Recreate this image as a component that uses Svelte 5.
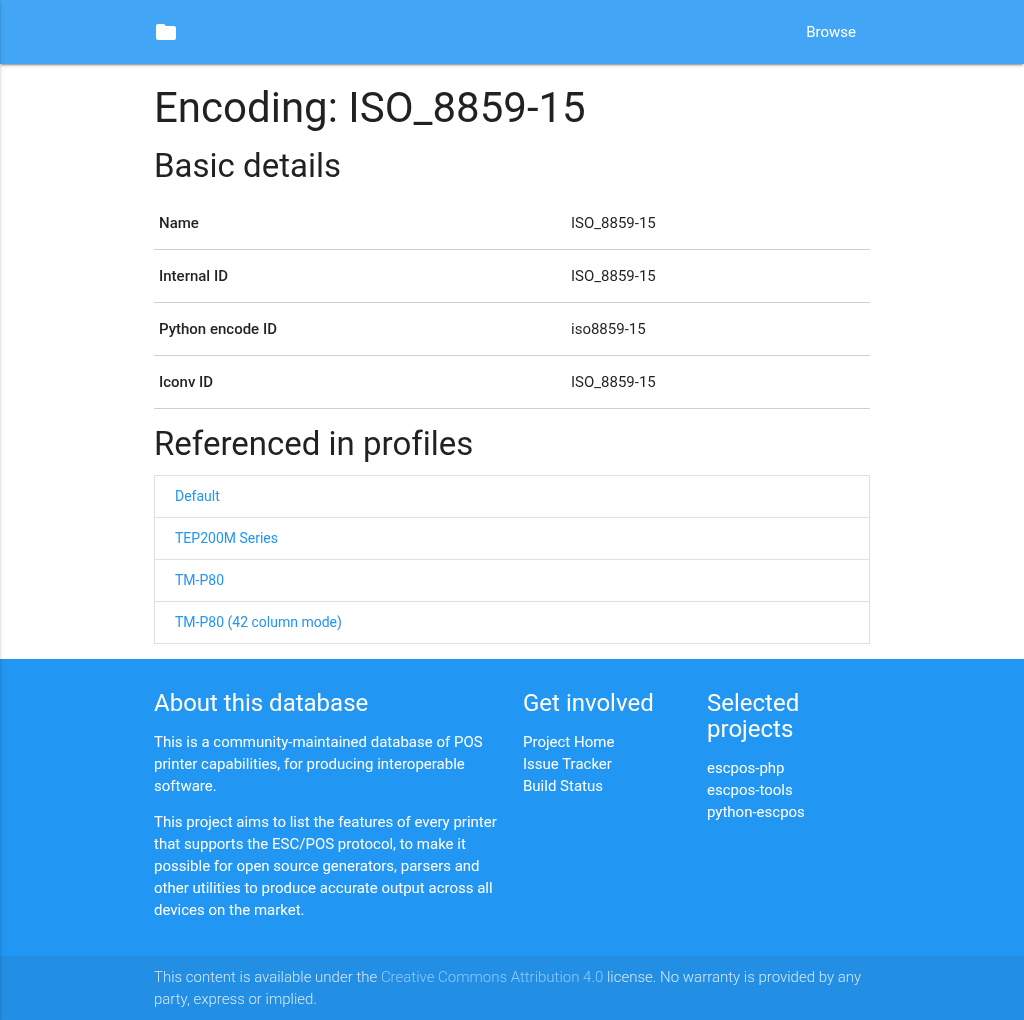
<script>
  const details = [
    ["Name", "ISO_8859-15"],
    ["Internal ID", "ISO_8859-15"],
    ["Python encode ID", "iso8859-15"],
    ["Iconv ID", "ISO_8859-15"]
  ];
  const profiles = ["Default", "TEP200M Series", "TM-P80", "TM-P80 (42 column mode)"];
</script>

<div class="sidenav-shadow"></div>

<div class="page">
  <nav>
    <div class="container nav-inner">
      <a href="#home" class="brand" aria-label="Home">
        <svg width="24" height="24" viewBox="0 0 24 24"><path d="M10 4H4c-1.100 0-2 .9-2 2v12c0 1.100.9 2 2 2h16c1.100 0 2-.9 2-2V8c0-1.100-.9-2-2-2h-8l-2-2z" fill="#fff"/></svg>
      </a>
      <a href="#browse" class="browse">Browse</a>
    </div>
  </nav>

  <main class="container">
    <h1>Encoding: ISO_8859-15</h1>
    <h2>Basic details</h2>
    <table>
      <tbody>
        {#each details as row}
          <tr>
            <th>{row[0]}</th>
            <td>{row[1]}</td>
          </tr>
        {/each}
      </tbody>
    </table>
    <h2>Referenced in profiles</h2>
    <ul class="collection">
      {#each profiles as p}
        <li><a href="#profile">{p}</a></li>
      {/each}
    </ul>
  </main>

  <footer>
    <div class="container cols">
      <div class="about">
        <h5>About this database</h5>
        <p>This is a community-maintained database of POS printer capabilities, for producing interoperable software.</p>
        <p>This project aims to list the features of every printer that supports the ESC/POS protocol, to make it possible for open source generators, parsers and other utilities to produce accurate output across all devices on the market.</p>
      </div>
      <div class="involved">
        <h5>Get involved</h5>
        <ul>
          <li><a href="#a">Project Home</a></li>
          <li><a href="#b">Issue Tracker</a></li>
          <li><a href="#c">Build Status</a></li>
        </ul>
      </div>
      <div class="selected">
        <h5>Selected projects</h5>
        <ul>
          <li><a href="#d">escpos-php</a></li>
          <li><a href="#e">escpos-tools</a></li>
          <li><a href="#f">python-escpos</a></li>
        </ul>
      </div>
    </div>
    <div class="copyright">
      <div class="container">
        This content is available under the <a href="#cc">Creative Commons Attribution 4.0</a> license. No warranty is provided by any party, express or implied.
      </div>
    </div>
  </footer>
</div>

<style>
  :global(body) {
    font-family: Roboto, sans-serif;
    font-size: 15px;
    line-height: 1.5;
    color: rgba(0, 0, 0, 0.87);
    background: #fff;
    overflow: hidden;
    font-variant-ligatures: none;
  }

  a {
    text-decoration: none;
    color: inherit;
  }

  /* own layer, so text gets greyscale antialiasing */
  .page {
    will-change: transform;
  }

  .container {
    width: 716px;
    margin: 0 auto;
  }

  .sidenav-shadow {
    position: fixed;
    top: 0;
    bottom: 0;
    left: -10px;
    width: 10px;
    z-index: 5;
    box-shadow: 0 2px 2px 0 rgba(0, 0, 0, 0.14), 0 1px 5px 0 rgba(0, 0, 0, 0.12), 0 3px 1px -2px rgba(0, 0, 0, 0.2);
  }

  nav {
    height: 64px;
    background: #42a5f5;
    color: #fff;
    box-shadow: 0 2px 2px 0 rgba(0, 0, 0, 0.14), 0 1px 5px 0 rgba(0, 0, 0, 0.12), 0 3px 1px -2px rgba(0, 0, 0, 0.2);
    position: relative;
  }

  .nav-inner {
    display: flex;
    justify-content: space-between;
    align-items: center;
    height: 64px;
  }

  .brand {
    display: flex;
  }

  .browse {
    margin-right: 14px;
  }

  h1 {
    font-weight: 400;
    font-size: 42px;
    line-height: 46px;
    margin: 21px 0 0;
  }

  h2 {
    font-weight: 400;
    font-size: 33px;
    line-height: 36px;
    margin: 17px 0 0;
  }

  table {
    width: 100%;
    border-collapse: collapse;
    margin-top: 13px;
  }

  tr {
    border-bottom: 1px solid #d0d0d0;
  }

  th, td {
    padding: 15px 5px;
    text-align: left;
    line-height: 22px;
  }

  th {
    width: 402px;
    font-weight: 500;
  }

  .collection {
    list-style: none;
    margin: 13px 0 15px;
    padding: 0;
    border: 1px solid #e0e0e0;
  }

  .collection li {
    padding: 10px 20px;
    font-size: 14px;
    line-height: 21px;
    border-bottom: 1px solid #e0e0e0;
    color: #2196f3;
  }

  .collection li:last-child {
    border-bottom: none;
  }

  footer {
    background: #2196f3;
    color: #fff;
  }

  .cols {
    display: grid;
    grid-template-columns: 369px 184px 163px;
    padding-top: 20px;
    height: 277px;
  }

  h5 {
    font-weight: 400;
    font-size: 24px;
    line-height: 26px;
    margin: 11px 0 0;
  }

  .about, .involved, .selected {
    padding-right: 20px;
  }

  p {
    margin: 14px 0;
    line-height: 22px;
  }

  h5 + p {
    margin-top: 15px;
  }

  footer ul {
    list-style: none;
    margin: 15px 0 0;
    padding: 0;
    line-height: 22px;
  }

  .copyright {
    background: rgba(51, 51, 51, 0.08);
    color: rgba(255, 255, 255, 0.8);
    font-weight: 300;
    line-height: 22px;
    padding: 10px 0;
    height: 44px;
  }

  .copyright a {
    color: #90caf9;
  }
</style>
